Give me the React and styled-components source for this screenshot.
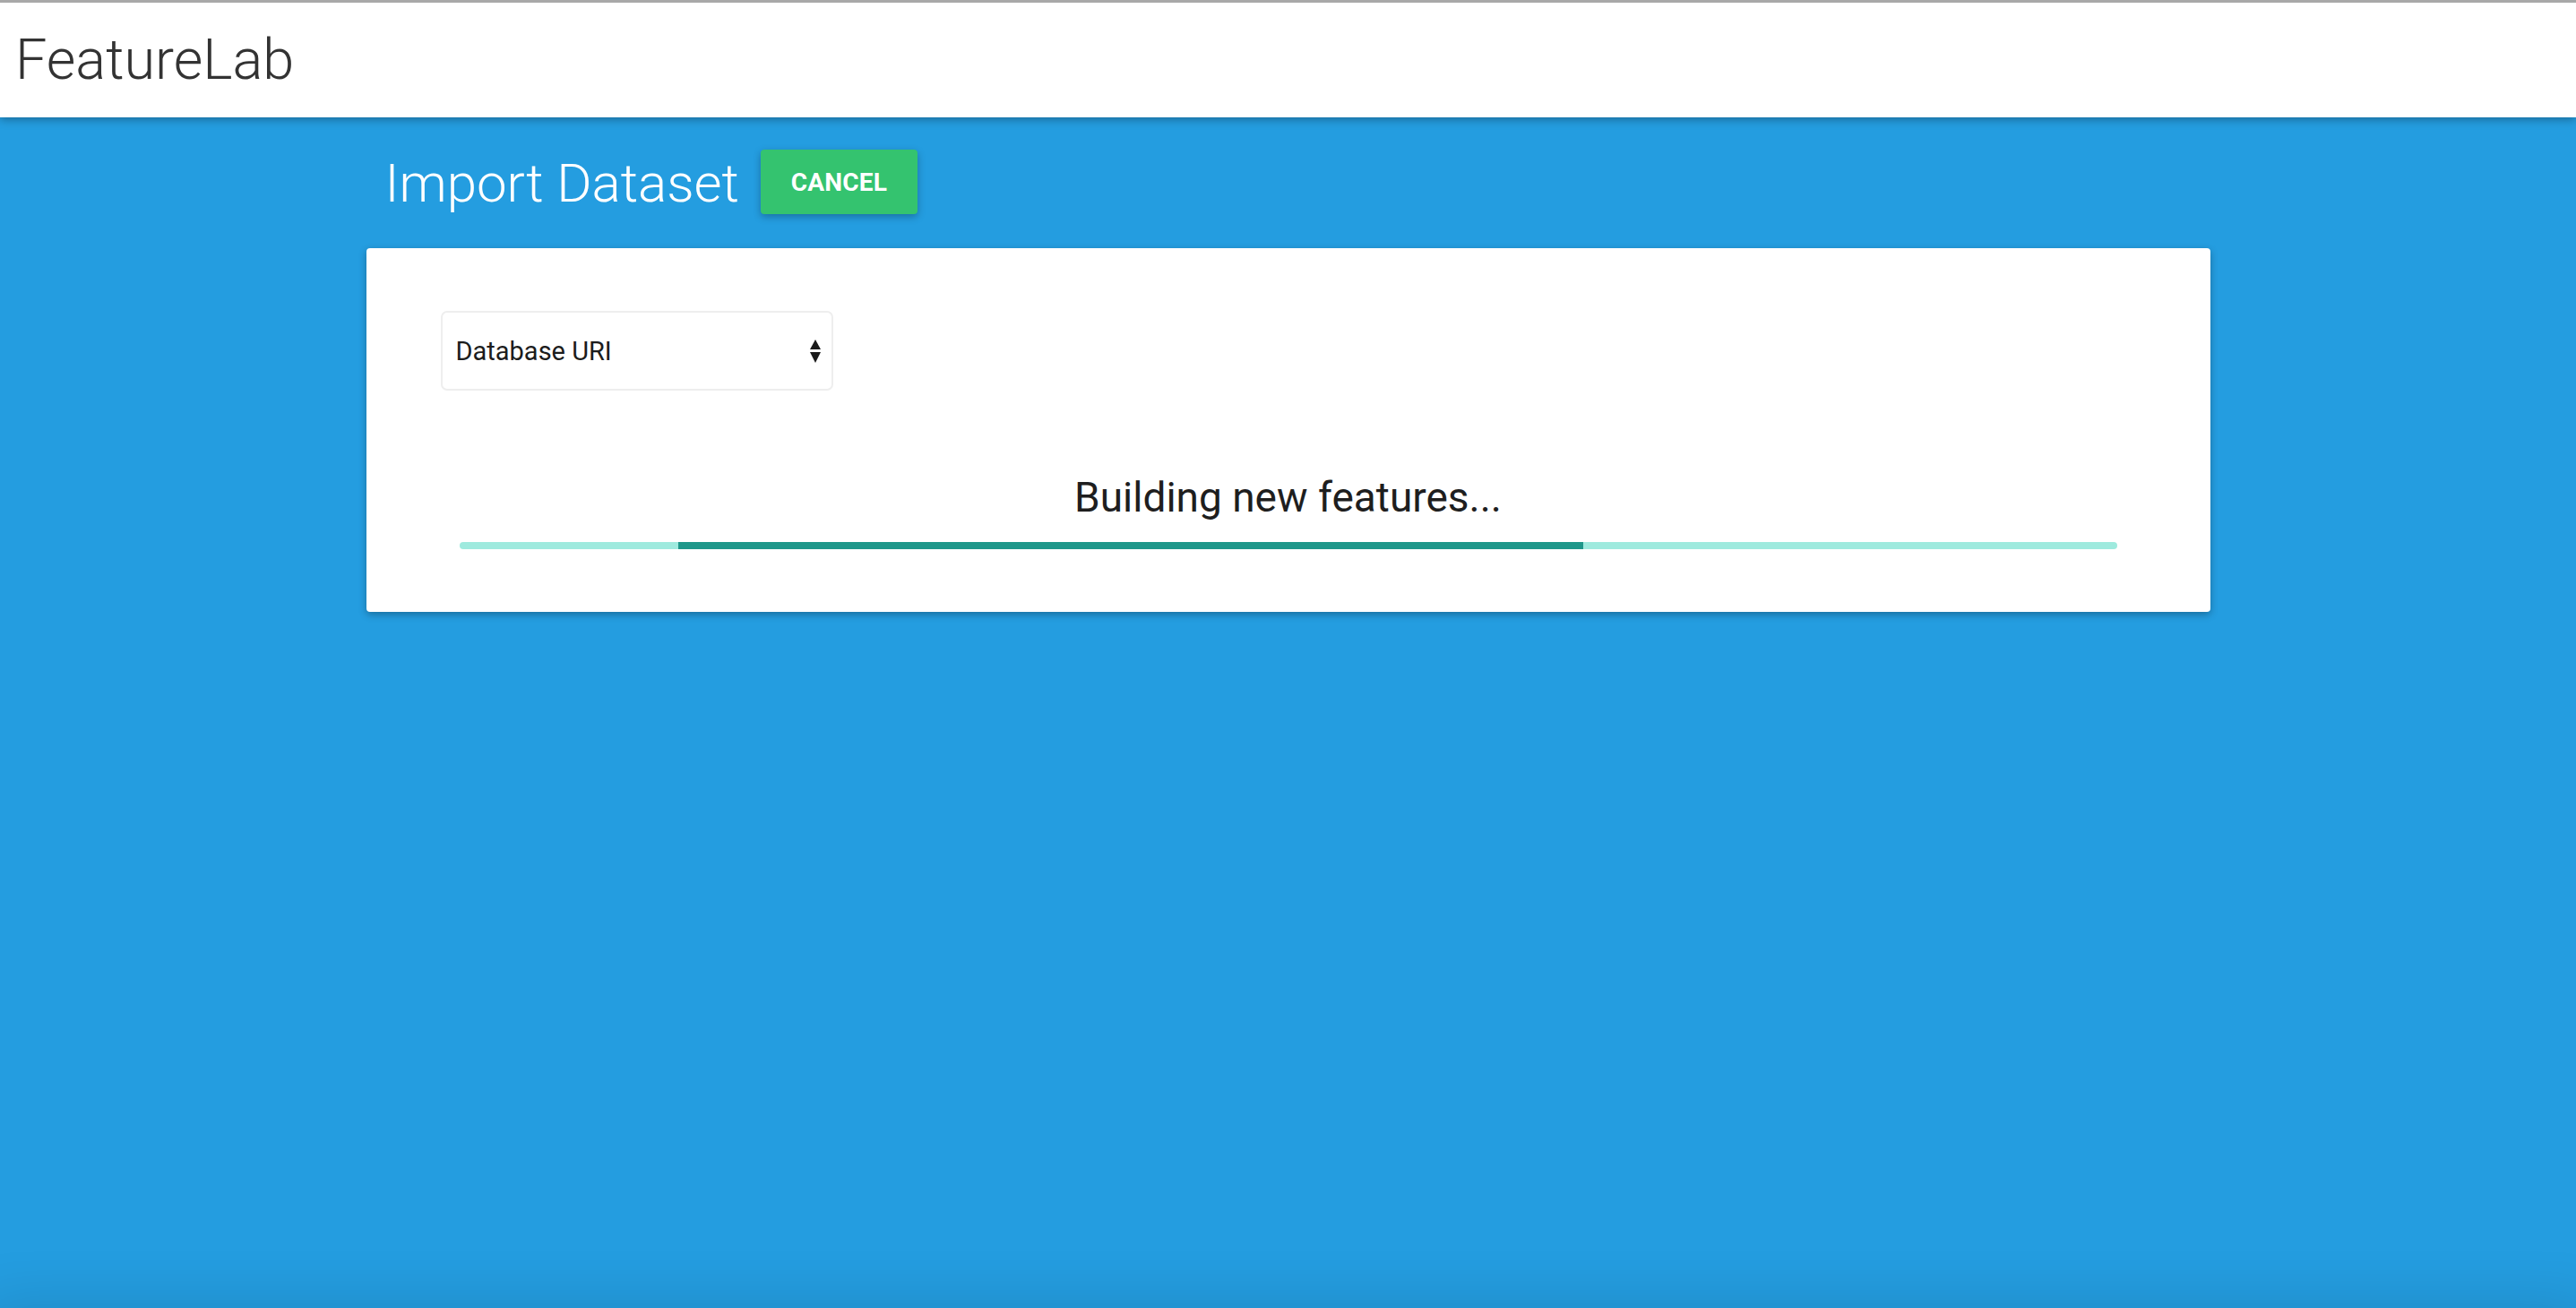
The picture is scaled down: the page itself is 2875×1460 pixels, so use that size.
import React from 'react'
import styled, { createGlobalStyle } from 'styled-components'

const GlobalStyle = createGlobalStyle`
  html, body {
    margin: 0;
    padding: 0;
    background: #249de0;
    font-family: Roboto, "Liberation Sans", sans-serif;
  }
  * { box-sizing: border-box; }
`

const Shell = styled.div`
  min-height: calc(100vh + 60px);
  display: flex;
  flex-direction: column;
  background: #249de0;
  overflow: hidden;
`

const Header = styled.header`
  position: relative;
  z-index: 2;
  height: 131px;
  border-top: 3px solid #a8a8a8;
  background: #fff;
  box-shadow: 0 2px 10px rgba(0, 0, 0, 0.35);
  display: flex;
  align-items: center;
  padding: 0 0 2px 17px;
`

const Brand = styled.div`
  font-size: 63px;
  font-weight: 300;
  line-height: 1;
  color: #333;
`

const Main = styled.main`
  flex: 1;
  width: 2058px;
  margin: 0 auto;
  padding-top: 36px;
`

const TitleRow = styled.div`
  display: flex;
  align-items: center;
  gap: 24px;
  padding-left: 21px;
  height: 72px;
  margin-bottom: 38px;
`

const Title = styled.h1`
  margin: 0 0 -4px;
  font-size: 60px;
  font-weight: 300;
  line-height: 1;
  color: #fff;
`

const Button = styled.button`
  height: 72px;
  width: 175px;
  border: none;
  border-radius: 4px;
  background: #34c36f;
  color: #fff;
  font-family: Roboto, "Liberation Sans", sans-serif;
  font-size: 28px;
  font-weight: 700;
  letter-spacing: 0.2px;
  text-transform: uppercase;
  box-shadow: 0 3px 8px rgba(0, 0, 0, 0.28);
  cursor: pointer;
`

const Card = styled.section`
  background: #fff;
  border-radius: 4px;
  box-shadow: 0 3px 8px rgba(0, 0, 0, 0.3);
  padding: 70px 83px;
`

const SelectBox = styled.div`
  width: 438px;
  height: 89px;
  border: 2px solid #eeeeee;
  border-radius: 7px;
  display: flex;
  align-items: center;
  justify-content: space-between;
  padding: 0 11px 0 15px;
  font-size: 29px;
  color: #1c1c1c;
`

const Progress = styled.div`
  padding: 0 21px;
  margin-top: 96px;
  text-align: center;
`

const Status = styled.div`
  font-size: 46px;
  line-height: 1;
  color: #1e1e1e;
  margin-bottom: 27px;
`

const Track = styled.div`
  height: 8px;
  border-radius: 4px;
  background: #9eeade;
  overflow: hidden;
  display: flex;
`

const Bar = styled.div`
  height: 100%;
  margin-left: ${(p) => p.$start}%;
  width: ${(p) => p.$size}%;
  background: #1e978a;
`

const Footer = styled.footer`
  height: 60px;
  margin: 0 -20px;
  background: #249de0;
  box-shadow: 0 0 70px rgba(0, 0, 0, 0.14);
`

const Arrows = () => (
  <svg width="14" height="28" viewBox="0 0 14 28">
    <path d="M7 1 L13 12 L1 12 Z" fill="#1a1a1a" />
    <path d="M1 15 L13 15 L7 27 Z" fill="#1a1a1a" />
  </svg>
)

export default function App() {
  return (
    <>
      <GlobalStyle />
      <Shell>
        <Header>
          <Brand>FeatureLab</Brand>
        </Header>
        <Main>
          <TitleRow>
            <Title>Import Dataset</Title>
            <Button>Cancel</Button>
          </TitleRow>
          <Card>
            <SelectBox>
              <span>Database URI</span>
              <Arrows />
            </SelectBox>
            <Progress>
              <Status>Building new features...</Status>
              <Track>
                <Bar $start={13.19} $size={54.6} />
              </Track>
            </Progress>
          </Card>
        </Main>
        <Footer />
      </Shell>
    </>
  )
}
